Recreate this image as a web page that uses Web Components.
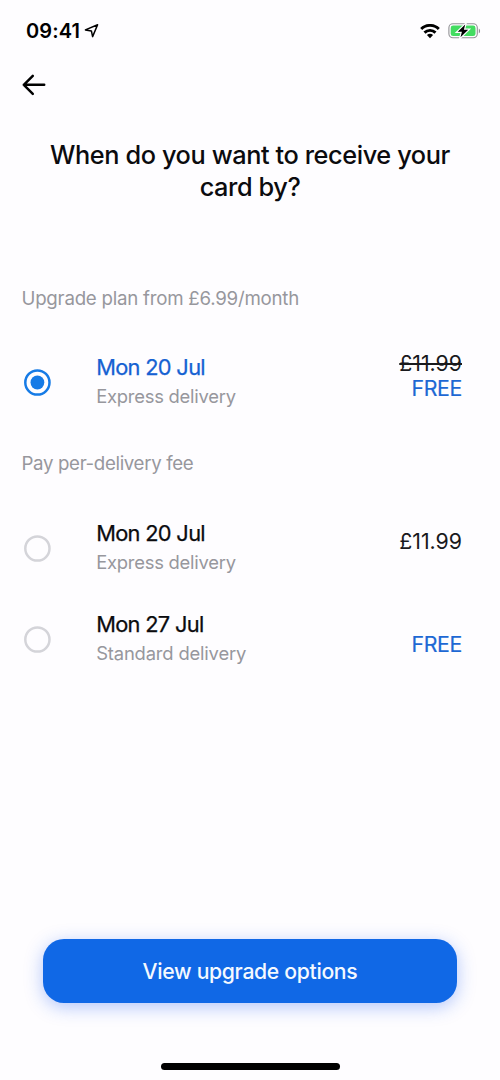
<!DOCTYPE html>
<html lang="en">
<head>
<meta charset="utf-8">
<title>Card delivery</title>
<style>
html,body{margin:0;height:100%;background:#fefdff}
body{font-family:Inter,"Liberation Sans",sans-serif;color:#0b0b0e;overflow:hidden}
</style>
</head>
<body>
<delivery-screen></delivery-screen>
<script>
const define = (name, html) => customElements.define(name, class extends HTMLElement {
  constructor() {
    super();
    this.attachShadow({ mode: 'open' }).innerHTML = html;
  }
});

define('status-bar', `
<style>
:host{display:flex;height:62px;box-sizing:border-box;padding:0 19px 0 26px;align-items:center;color:#000}
.time{font-size:20px;font-weight:600;letter-spacing:.1px;line-height:24px}
svg{display:block;flex:none}
.loc{margin-left:4px}
.wifi{margin-left:auto}
.bat{margin-left:8px}
</style>
<span class="time">09:41</span>
<svg class="loc" width="16" height="16" viewBox="0 0 16 16"><path d="M1.4 6.9 13.6 1.8 8.6 13.6 7.4 7.9Z" fill="none" stroke="#000" stroke-width="1.5" stroke-linejoin="round"/></svg>
<svg class="wifi" width="20" height="15" viewBox="0 0 20 15"><g fill="none" stroke="#000" stroke-width="2.9"><path d="M1.2 5a12.6 12.6 0 0 1 17.6 0"/><path d="M4.5 8.6a7.9 7.9 0 0 1 11 0"/></g><path d="M6.9 11.1a4.5 4.5 0 0 1 6.2 0L10 14.2Z"/></svg>
<svg class="bat" width="33" height="16" viewBox="0 0 33 16"><rect x=".9" y=".8" width="28.4" height="14" rx="4" fill="none" stroke="#929296" stroke-width="1.1"/><rect x="2.7" y="2.5" width="24.8" height="10.6" rx="2.4" fill="#43dc61"/><path d="M30.8 5.4c1.7.7 1.7 4.2 0 4.9Z" fill="#929296"/><path d="M17.2 1.6 9.7 8.8h4.2l-1.4 5.5 7.7-7.5h-4.3Z" stroke="#fefdff" stroke-width="2.4" paint-order="stroke"/></svg>`);

define('nav-bar', `
<style>
:host{display:flex;height:46px;padding-left:21px;align-items:center}
svg{display:block}
</style>
<svg width="26" height="24" viewBox="0 0 26 24" role="img" aria-label="Back"><path d="M23.2 11.8H2.8M11.8 2.8 2.8 11.8l9 9" fill="none" stroke="#000" stroke-width="2.5" stroke-linecap="round" stroke-linejoin="round"/></svg>`);

define('section-label', `
<style>:host{display:block;font-size:18.7px;line-height:24px;color:#97979d;padding-left:21.5px;letter-spacing:var(--track,-.24px)}</style><slot></slot>`);

define('radio-dot', `
<style>
:host{display:block;width:27px;height:27px;color:#d4d4d9}
:host([checked]){color:#167be6}
svg{display:block}
.dot{display:none}
:host([checked]) .dot{display:block}
</style><svg width="27" height="27" viewBox="0 0 27 27"><circle cx="13.4" cy="13.5" r="12.1" fill="none" stroke="currentColor" stroke-width="2.5"/><circle class="dot" cx="13.4" cy="13.5" r="6.9" fill="currentColor"/></svg>`);

customElements.define('delivery-option', class extends HTMLElement {
  constructor() {
    super();
    this.attachShadow({ mode: 'open' }).innerHTML = `
<style>
:host{display:grid;grid-template-columns:72.2px 1fr auto;height:58px;padding:0 38px 0 24px;align-items:center}
.text{margin-top:-2px}
.title{font-size:21.8px;line-height:30px;-webkit-text-stroke:.25px currentColor;letter-spacing:-.68px}
.sub{font-size:18.4px;line-height:28px;color:#97979d;letter-spacing:var(--sub-track,-.24px)}
.price{font-size:21.3px;line-height:25px;text-align:right;align-self:start;margin-top:var(--price-top,0)}
:host([selected]) .title{color:#1561d2}
</style>
<radio-dot></radio-dot>
<div class="text"><div class="title"><slot name="date"></slot></div><div class="sub"><slot name="speed"></slot></div></div>
<div class="price"><slot></slot></div>`;
    this.shadowRoot.querySelector('radio-dot').toggleAttribute('checked', this.hasAttribute('selected'));
  }
});

define('price-tag', `
<style>
:host{display:block;color:#19191c}
:host([old]){text-decoration:line-through;text-decoration-thickness:1.6px}
:host([free]){color:#1d68d4;letter-spacing:-.35px;-webkit-text-stroke:.2px currentColor}
</style><slot></slot>`);

define('primary-button', `
<style>
:host{display:block;margin:0 43px}
button{display:block;width:100%;height:64px;border:0;border-radius:21px;background:#1068e6;color:#f4f9ff;font:500 21.2px/64px Inter,"Liberation Sans",sans-serif;letter-spacing:-.33px;padding:0;box-shadow:0 4px 18px rgba(30,90,240,.34)}
</style><button><slot></slot></button>`);

define('delivery-screen', `
<style>
:host{display:flex;flex-direction:column;width:500px;height:1080px;background:#fefdff}
h1{margin:31.2px 0 84.8px;font-size:25.3px;line-height:31.5px;font-weight:500;text-align:center;letter-spacing:-.4px}
.first{margin-top:42.5px;--price-top:-2.3px}
.two{margin-top:41px;--track:-.35px}
.second{margin-top:43px;--price-top:10px}
.third{margin-top:33px;--price-top:22px;--sub-track:-.17px}
primary-button{margin-top:auto;margin-bottom:60px}
.home{width:179px;height:6.6px;border-radius:4px;background:#000;margin:0 auto 10.5px}
</style>
<status-bar></status-bar>
<nav-bar></nav-bar>
<h1>When do you want to receive your<br>card by?</h1>
<section-label>Upgrade plan from £6.99/month</section-label>
<delivery-option class="first" selected><span slot="date">Mon 20 Jul</span><span slot="speed">Express delivery</span><price-tag old>£11.99</price-tag><price-tag free>FREE</price-tag></delivery-option>
<section-label class="two">Pay per-delivery fee</section-label>
<delivery-option class="second"><span slot="date">Mon 20 Jul</span><span slot="speed">Express delivery</span><price-tag>£11.99</price-tag></delivery-option>
<delivery-option class="third"><span slot="date">Mon 27 Jul</span><span slot="speed">Standard delivery</span><price-tag free>FREE</price-tag></delivery-option>
<primary-button>View upgrade options</primary-button>
<div class="home"></div>`);
</script>
</body>
</html>
